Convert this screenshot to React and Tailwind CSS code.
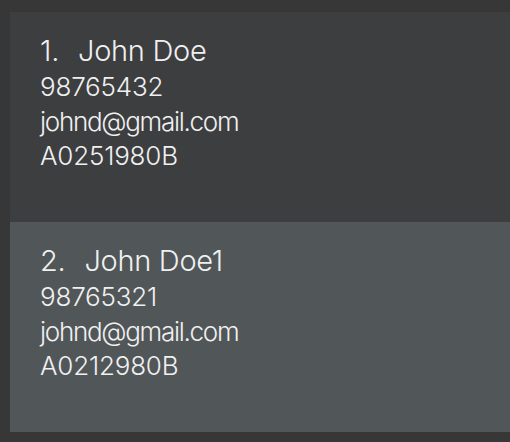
const persons = [
  { name: "John Doe", phone: "98765432", email: "johnd@gmail.com", id: "A0251980B" },
  { name: "John Doe1", phone: "98765321", email: "johnd@gmail.com", id: "A0212980B" },
];

function PersonCard({ index, person, selected }) {
  return (
    <div
      className={`h-[210px] pl-[30px] pt-[20px] ${selected ? "bg-[#515658]" : "bg-[#3d3e40]"}`}
    >
      <div className="flex items-baseline gap-[19px] text-[29px] font-[350] leading-[38px] tracking-[-0.3px] text-[#f0f0f0]">
        <span>{index}.</span>
        <span>{person.name}</span>
      </div>
      <div className="text-[26px] font-[350] leading-[34.5px] tracking-[-0.2px] text-[#f0f0f0]">
        <p>{person.phone}</p>
        <p className="tracking-[-1.3px]">{person.email}</p>
        <p>{person.id}</p>
      </div>
    </div>
  );
}

export default function App() {
  return (
    <div
      className="flex h-[442px] w-[510px] flex-col overflow-hidden bg-[#373737] pl-[10px] pt-[12px]"
      style={{ fontFamily: 'Inter, "Liberation Sans", sans-serif' }}
    >
      {persons.map((p, i) => (
        <PersonCard key={p.id} index={i + 1} person={p} selected={i === 1} />
      ))}
    </div>
  );
}
